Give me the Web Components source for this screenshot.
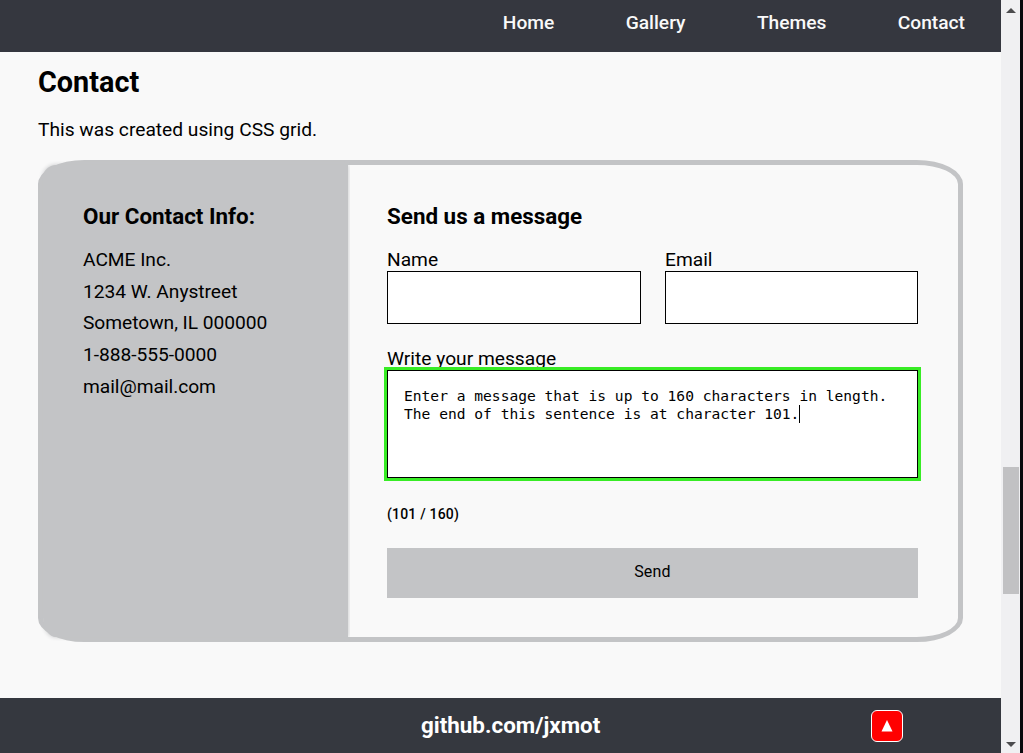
<!DOCTYPE html>
<html lang="en">
<head>
<meta charset="utf-8">
<title>Contact</title>
<style>
html,body{margin:0;height:100%;overflow:hidden}
body{font-family:Roboto,sans-serif;color:#000;background:#f9f9f9}
</style>
</head>
<body>
<app-window>
  <site-nav></site-nav>
  <contact-section></contact-section>
  <site-footer></site-footer>
</app-window>
<script>
const define = (name, html) => customElements.define(name, class extends HTMLElement {
  constructor() {
    super();
    const t = document.createElement('template');
    t.innerHTML = html;
    this.attachShadow({mode: 'open'}).append(t.content.cloneNode(true));
  }
});

define('scroll-bar', `<style>
:host{display:flex;flex-direction:column;align-items:center;box-sizing:border-box;width:22px;height:753px;background:#f0f0f2;border-right:3px solid #08090c;padding-top:8px}
svg{display:block;width:10px;height:5px;flex:none}
.thumb{width:16px;height:127px;background:#c1c1c3;margin:454px 0 148px}
</style>
<svg viewBox="0 0 10 5"><path d="M0 5 5 0l5 5z" fill="#4c4c4e"/></svg>
<div class="thumb"></div>
<svg viewBox="0 0 10 5"><path d="M0 0h10L5 5z" fill="#4c4c4e"/></svg>`);

define('app-window', `<style>
:host{display:flex;width:1023px;height:753px}
main{width:1001px;display:flex;flex-direction:column}
</style><main><slot></slot></main><scroll-bar></scroll-bar>`);

define('nav-link', `<style>
:host{display:block;color:#f9f9f9;font-weight:500;font-size:19.2px;line-height:22px;white-space:nowrap}
</style><slot></slot>`);

define('site-nav', `<style>
:host{display:flex;box-sizing:border-box;height:52px;flex:none;background:#35373f;justify-content:flex-end;gap:71.4px;padding:12px 36px 0 0}
</style><nav-link>Home</nav-link><nav-link>Gallery</nav-link><nav-link>Themes</nav-link><nav-link>Contact</nav-link>`);

define('contact-info', `<style>
:host{display:block;box-sizing:border-box;width:305px;padding:35px 0 0 40px;background:#c3c4c6;box-shadow:0 0 4px #c3c4c6;border-radius:13px 0 0 13px / 13px 0 0 20px;clip-path:inset(-5px -2px -5px -5px);font-size:19.2px}
h3{margin:0 0 12px;font-size:22.4px;line-height:32px;font-weight:700}
p{margin:0;line-height:31.7px;white-space:nowrap;letter-spacing:-.03px}
</style><h3>Our Contact Info:</h3><p>ACME Inc.</p><p>1234 W. Anystreet</p><p>Sometown, IL 000000</p><p>1-888-555-0000</p><p>mail@mail.com</p>`);

define('text-field', `<style>
:host{display:block;font-size:19.2px}
label{display:block;line-height:26px;height:24px}
.box{box-sizing:border-box;height:53px;background:#fff;border:1px solid #000}
</style><label><slot></slot></label><div class="box"></div>`);

define('message-field', `<style>
:host{display:block;font-size:19.2px}
label{display:block;line-height:26px;height:24px}
.box{box-sizing:border-box;height:108px;background:#fff;border:1px solid #000;box-shadow:0 0 0 3px #38ec25;padding:16px;font:14.6px/18px "DejaVu Sans Mono",monospace;position:relative}
.line{display:flex;white-space:pre}
i{width:1px;height:18px;background:#000}
</style><label>Write your message</label><div class="box"><div class="line">Enter a message that is up to 160 characters in length.</div><div class="line">The end of this sentence is at character 101.<i></i></div></div>`);

define('message-form', `<style>
:host{display:block;width:531px;padding:35px 0 0 39px}
h3{margin:0 0 15px;font-size:22.4px;line-height:32px;font-weight:700}
.row{display:grid;grid-template-columns:254px 253px;gap:24px;margin-bottom:22px}
small{display:block;margin-top:26px;font-size:14px;line-height:20px;font-weight:500;letter-spacing:.2px}
.send{margin-top:24px;height:50px;background:#c3c4c6;font-size:16px;line-height:47px;text-align:center;letter-spacing:.2px}
</style><h3>Send us a message</h3><div class="row"><text-field>Name</text-field><text-field>Email</text-field></div>
<message-field></message-field><small>(101 / 160)</small><div class="send">Send</div>`);

define('contact-section', `<style>
:host{display:block;flex:1;padding:14px 38px 0;background:#f9f9f9}
h2{margin:0;font-size:28.8px;line-height:32px;font-weight:700}
.intro{margin:20px 0 18px;font-size:19.2px;line-height:24px}
.card{display:flex;box-sizing:border-box;height:482px;border:5px solid #c3c4c6;border-radius:5%}
</style><h2>Contact</h2><p class="intro">This was created using CSS grid.</p>
<div class="card"><contact-info></contact-info><message-form></message-form></div>`);

define('site-footer', `<style>
:host{display:grid;grid-template-columns:871px 32px;flex:none;height:55px;background:#35383f;color:#fff;align-items:center}
.link{padding:0 0 2px 421px;font-size:22.4px;line-height:28px;font-weight:700}
.top{display:grid;place-items:center;box-sizing:border-box;width:32px;height:32px;background:#f00;border:1px solid #fff;border-radius:6px}
svg{display:block;width:12px;height:12px}
</style><div class="link">github.com/jxmot</div><div class="top"><svg viewBox="0 0 12 12"><path d="M0.5 11.5 6 0l5.5 11.5z" fill="#fff"/></svg></div>`);
</script>
</body>
</html>
